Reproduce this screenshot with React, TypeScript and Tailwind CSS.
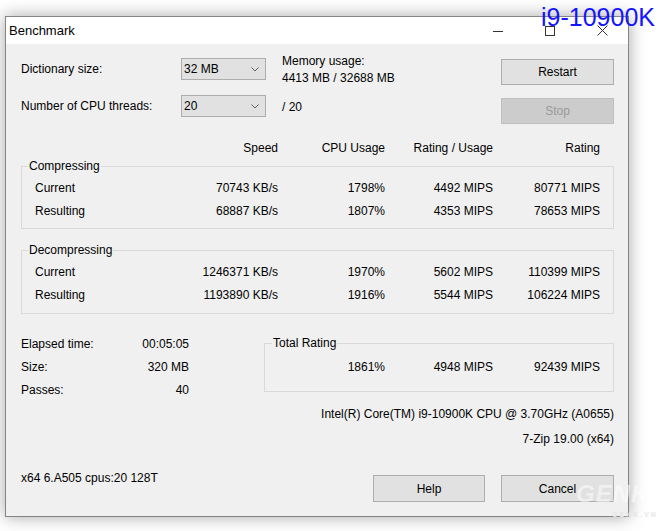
import React from "react";

type Row = {
  label: string;
  speed: string;
  cpu: string;
  perUsage: string;
  rating: string;
};

const compressing: Row[] = [
  { label: "Current", speed: "70743 KB/s", cpu: "1798%", perUsage: "4492 MIPS", rating: "80771 MIPS" },
  { label: "Resulting", speed: "68887 KB/s", cpu: "1807%", perUsage: "4353 MIPS", rating: "78653 MIPS" },
];

const decompressing: Row[] = [
  { label: "Current", speed: "1246371 KB/s", cpu: "1970%", perUsage: "5602 MIPS", rating: "110399 MIPS" },
  { label: "Resulting", speed: "1193890 KB/s", cpu: "1916%", perUsage: "5544 MIPS", rating: "106224 MIPS" },
];

function Combo({ value }: { value: string }) {
  return (
    <div className="flex h-[22px] w-[85px] items-center justify-between border border-[#adadad] bg-[#e1e1e1] pl-[2px] pr-[6px]">
      <span>{value}</span>
      <svg width="8" height="5" viewBox="0 0 8 5" fill="none">
        <path d="M0.5 0.5 L4 4 L7.5 0.5" stroke="#606060" strokeWidth="1" />
      </svg>
    </div>
  );
}

function Button({ label, disabled, className = "" }: { label: string; disabled?: boolean; className?: string }) {
  return (
    <div
      className={
        "flex items-center justify-center border " +
        (disabled
          ? "border-[#bfbfbf] bg-[#cccccc] text-[#9a9a9a] "
          : "border-[#adadad] bg-[#e1e1e1] text-black ") +
        className
      }
    >
      {label}
    </div>
  );
}

function Group({ title, rows, last }: { title: string; rows: Row[]; last?: boolean }) {
  return (
    <fieldset
      className={
        "border border-[#d9d9d9] pt-[2px] " + (last ? "mt-[13px] pb-[7px]" : "mt-[2px] pb-[6px]")
      }
    >
      <legend className="ml-[6px] px-[1px] leading-[16px]">{title}</legend>
      {rows.map((r) => (
        <div key={r.label} className="flex h-[23px] items-center">
          <span className="w-[113px] pl-[13px]">{r.label}</span>
          <span className="w-[143px] text-right">{r.speed}</span>
          <span className="w-[107px] text-right">{r.cpu}</span>
          <span className="w-[108px] text-right">{r.perUsage}</span>
          <span className="w-[107px] text-right">{r.rating}</span>
        </div>
      ))}
    </fieldset>
  );
}

export default function App() {
  return (
    <div className="relative h-[531px] w-[660px] overflow-hidden bg-white font-['Liberation_Sans',Arial,sans-serif] text-[12px] text-black">
      {/* window */}
      <div className="ml-[5px] mt-[16px] flex h-[501px] w-[624px] flex-col border border-[#858585] shadow-[0_0_16px_rgba(0,0,0,0.35)]">
        {/* title bar */}
        <div className="flex h-[27px] items-center bg-white">
          <span className="pl-[3px] text-[13px]">Benchmark</span>
          <div className="ml-auto flex h-full">
            <div className="flex w-[52px] items-center justify-center">
              <svg width="10" height="10" viewBox="0 0 10 10">
                <path d="M0 5.5 H10" stroke="#333" strokeWidth="1" />
              </svg>
            </div>
            <div className="flex w-[52px] items-center justify-center">
              <svg width="10" height="10" viewBox="0 0 10 10" fill="none">
                <rect x="0.5" y="0.5" width="9" height="9" stroke="#333" strokeWidth="1" />
              </svg>
            </div>
            <div className="flex w-[52px] items-center justify-center">
              <svg width="11" height="11" viewBox="0 0 11 11" fill="none">
                <path d="M0.5 0.5 L10.5 10.5 M10.5 0.5 L0.5 10.5" stroke="#333" strokeWidth="1" />
              </svg>
            </div>
          </div>
        </div>

        {/* body */}
        <div className="flex flex-1 flex-col bg-[#f0f0f0] pl-[15px] pr-[14px]">
          {/* settings */}
          <div className="flex pt-[14px]">
            <div className="flex flex-col">
              <div className="flex h-[22px] items-center">
                <span className="w-[160px]">Dictionary size:</span>
                <Combo value="32 MB" />
                <div className="-mt-[5px] ml-[16px] self-start leading-[17px]">
                  <div>Memory usage:</div>
                  <div>4413 MB / 32688 MB</div>
                </div>
              </div>
              <div className="mt-[15px] flex h-[22px] items-center">
                <span className="w-[160px]">Number of CPU threads:</span>
                <Combo value="20" />
                <span className="ml-[16px] mt-[2px]">/ 20</span>
              </div>
            </div>
            <div className="ml-auto flex flex-col pt-[1px]">
              <Button label="Restart" className="h-[26px] w-[113px]" />
              <Button label="Stop" disabled className="mt-[13px] h-[26px] w-[113px]" />
            </div>
          </div>

          {/* column headers */}
          <div className="mt-[16px] flex leading-[16px]">
            <span className="w-[257px] text-right">Speed</span>
            <span className="w-[107px] text-right">CPU Usage</span>
            <span className="w-[108px] text-right">Rating / Usage</span>
            <span className="w-[107px] text-right">Rating</span>
          </div>

          <Group title="Compressing" rows={compressing} />
          <Group title="Decompressing" rows={decompressing} last />

          {/* totals */}
          <div className="mt-[18px] flex items-start">
            <div className="flex w-[168px] flex-col">
              <div className="flex h-[23px] items-center justify-between">
                <span>Elapsed time:</span>
                <span>00:05:05</span>
              </div>
              <div className="flex h-[23px] items-center justify-between">
                <span>Size:</span>
                <span>320 MB</span>
              </div>
              <div className="flex h-[23px] items-center justify-between">
                <span>Passes:</span>
                <span>40</span>
              </div>
            </div>
            <fieldset className="ml-auto mt-[3px] w-[350px] border border-[#d9d9d9] pb-[13px] pt-[4px]">
              <legend className="ml-[7px] px-[1px] leading-[16px]">Total Rating</legend>
              <div className="flex h-[23px] items-center">
                <span className="w-[120px] text-right">1861%</span>
                <span className="w-[108px] text-right">4948 MIPS</span>
                <span className="w-[107px] text-right">92439 MIPS</span>
              </div>
            </fieldset>
          </div>

          <div className="mt-[1px] text-right leading-[25px]">
            <div>Intel(R) Core(TM) i9-10900K CPU @ 3.70GHz (A0655)</div>
            <div>7-Zip 19.00 (x64)</div>
          </div>

          <div className="mt-[18px] flex items-start">
            <span className="leading-[16px]">x64 6.A505 cpus:20 128T</span>
            <Button label="Help" className="ml-auto mt-[5px] h-[27px] w-[112px]" />
            <Button label="Cancel" className="ml-[16px] mt-[5px] h-[27px] w-[113px]" />
          </div>
        </div>
      </div>

      {/* overlays from the screenshot */}
      <div className="absolute left-[541px] top-[5px] text-[25px] leading-[25px] text-[#1414ff]">i9-10900K</div>
      <div className="absolute left-[576px] top-[482px] text-[24px] font-black italic leading-[24px] tracking-[1px] text-white/50">
        GENK
      </div>
      <div className="absolute left-[612px] top-[510px] text-[7px] font-bold tracking-[2px] text-[#e6e6e6]">
        GENK.VN
      </div>
    </div>
  );
}
